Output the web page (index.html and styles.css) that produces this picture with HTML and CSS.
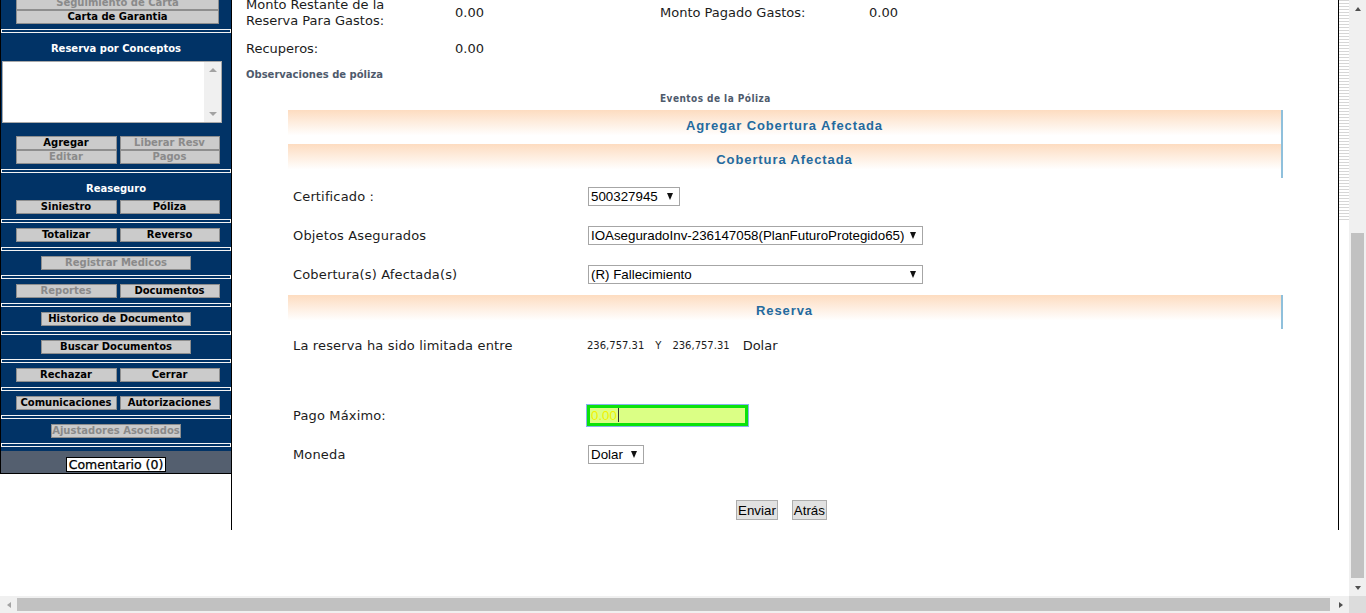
FILE: index.html
```html
<!DOCTYPE html>
<html lang="es">
<head>
<meta charset="utf-8">
<title>Agregar Cobertura Afectada</title>
<link rel="stylesheet" href="styles.css">
</head>
<body>
<div class="screen">
  <div class="viewport">
    <div class="page">
      <aside class="sidebar">
        <div class="side-sec first">
          <div class="btn w203 disabled">Seguimiento de Carta</div>
          <div class="btn w203">Carta de Garantia</div>
        </div>
        <div class="sep"></div>
        <div class="side-sec">
          <div class="side-title">Reserva por Conceptos</div>
          <div class="fake-ta"><div class="ta-bar"><span class="tri-up"></span><span class="tri-down"></span></div></div>
          <div class="pair mt13">
            <div class="btn hl">Agregar</div><div class="btn hr disabled">Liberar Resv</div>
          </div>
          <div class="pair">
            <div class="btn hl disabled">Editar</div><div class="btn hr disabled">Pagos</div>
          </div>
        </div>
        <div class="sep"></div>
        <div class="side-sec">
          <div class="side-title">Reaseguro</div>
          <div class="pair mt4">
            <div class="btn hl">Siniestro</div><div class="btn hr">Póliza</div>
          </div>
        </div>
        <div class="sep"></div>
        <div class="side-sec">
          <div class="pair"><div class="btn hl">Totalizar</div><div class="btn hr">Reverso</div></div>
        </div>
        <div class="sep"></div>
        <div class="side-sec">
          <div class="btn w150 disabled">Registrar Medicos</div>
        </div>
        <div class="sep"></div>
        <div class="side-sec">
          <div class="pair"><div class="btn hl disabled">Reportes</div><div class="btn hr">Documentos</div></div>
        </div>
        <div class="sep"></div>
        <div class="side-sec">
          <div class="btn w150">Historico de Documento</div>
        </div>
        <div class="sep"></div>
        <div class="side-sec">
          <div class="btn w150">Buscar Documentos</div>
        </div>
        <div class="sep"></div>
        <div class="side-sec">
          <div class="pair"><div class="btn hl">Rechazar</div><div class="btn hr">Cerrar</div></div>
        </div>
        <div class="sep"></div>
        <div class="side-sec">
          <div class="pair"><div class="btn hl">Comunicaciones</div><div class="btn hr">Autorizaciones</div></div>
        </div>
        <div class="sep"></div>
        <div class="side-sec">
          <div class="btn w130 disabled">Ajustadores Asociados</div>
        </div>
        <div class="sep"></div>
        <div class="comment-bar">
          <div class="comment-btn">Comentario (0)</div>
        </div>
      </aside>

      <main class="main">
        <div class="main-inner">
          <table class="summary">
            <tr>
              <td class="c1">Monto Restante de la<br>Reserva Para Gastos:</td>
              <td class="c2">0.00</td>
              <td class="c3">Monto Pagado Gastos:</td>
              <td class="c4">0.00</td>
            </tr>
            <tr>
              <td class="c1">Recuperos:</td>
              <td class="c2">0.00</td>
              <td class="c3"></td>
              <td class="c4"></td>
            </tr>
          </table>
          <div class="obs">Observaciones de póliza</div>
          <div class="eventos">Eventos de la Póliza</div>

          <div class="form-wrap">
            <div class="bar">Agregar Cobertura Afectada</div>
            <div class="bar">Cobertura Afectada</div>

            <div class="frow r39">
              <div class="flabel">Certificado :</div>
              <div class="fval"><div class="sel w92"><span>500327945</span><i class="arr"></i></div></div>
            </div>
            <div class="frow r39">
              <div class="flabel">Objetos Asegurados</div>
              <div class="fval"><div class="sel w335"><span>IOAseguradoInv-236147058(PlanFuturoProtegido65)</span><i class="arr"></i></div></div>
            </div>
            <div class="frow r39">
              <div class="flabel">Cobertura(s) Afectada(s)</div>
              <div class="fval"><div class="sel w335"><span>(R) Fallecimiento</span><i class="arr"></i></div></div>
            </div>

            <div class="bar">Reserva</div>

            <div class="frow r32">
              <div class="flabel">La reserva ha sido limitada entre</div>
              <div class="fval nums"><span class="small">236,757.31</span><span class="small y">Y</span><span class="small">236,757.31</span><span class="cur">Dolar</span></div>
            </div>
            <div class="frow r34"></div>
            <div class="frow r40">
              <div class="flabel">Pago Máximo:</div>
              <div class="fval"><div class="money"><span class="money-val">0.00</span><span class="caret"></span></div></div>
            </div>
            <div class="frow r39m">
              <div class="flabel">Moneda</div>
              <div class="fval"><div class="sel w56"><span>Dolar</span><i class="arr"></i></div></div>
            </div>
            <div class="actions">
              <button class="act" type="button">Enviar</button>
              <button class="act" type="button">Atrás</button>
            </div>
          </div>
        </div>
      </main>
      <div class="stripes"></div>
    </div>
  </div>
  <div class="vscroll">
    <span class="sb-btn"><i class="a-up"></i></span>
    <div class="vtrack"><div class="vthumb"></div></div>
    <span class="sb-btn"><i class="a-down"></i></span>
  </div>
  <div class="hscroll">
    <span class="sb-btn"><i class="a-left"></i></span>
    <div class="htrack"><div class="hthumb"></div></div>
    <span class="sb-btn"><i class="a-right"></i></span>
  </div>
  <div class="corner"></div>
</div>
</body>
</html>
```
FILE: styles.css
```css
* { box-sizing: border-box; }
html, body { margin: 0; padding: 0; background: #fff; overflow: hidden; }
body { width: 1366px; height: 613px; font-family: "DejaVu Sans", Verdana, sans-serif; color: #1c1c1c; }

.screen {
  display: grid;
  grid-template-columns: 1349px 17px;
  grid-template-rows: 596px 17px;
  width: 1366px;
  height: 613px;
}
.viewport { overflow: hidden; background: #fff; }
.page { display: flex; align-items: flex-start; width: 1349px; }

/* ---------- sidebar ---------- */
.sidebar {
  width: 231px;
  flex: none;
  background: #013366;
  border-left: 1px solid #000;
}
.side-sec { padding: 5px 0; display: flex; flex-direction: column; align-items: center; }
.side-sec.first { margin-top: -9px; }
.sep {
  height: 4px;
  border: 1px solid #f4f4f4;
}
.side-title {
  margin-top: 4px;
  height: 14px;
  line-height: 14px;
  color: #fff;
  font-weight: bold;
  font-size: 10px;
  text-align: center;
  width: 100%;
}
.btn {
  height: 14px;
  line-height: 12px;
  background: #cbcbcb;
  border: 1px solid #8e8e8e;
  font-size: 10px;
  font-weight: bold;
  color: #000;
  text-align: center;
  white-space: nowrap;
  overflow: hidden;
}
.btn.disabled { color: #8a8a8a; }
.w203 { width: 203px; margin-left: 3px; }
.w150 { width: 150px; }
.w130 { width: 130px; }
.pair { display: flex; gap: 3px; margin-left: 3px; }
.pair .hl { width: 101px; }
.pair .hr { width: 100px; }
.mt13 { margin-top: 13px; }
.mt4 { margin-top: 4px; }

.fake-ta {
  margin-top: 5px;
  align-self: flex-start;
  margin-left: 1px;
  width: 220px;
  height: 62px;
  background: #fff;
  border: 1px solid #a9a9a9;
  display: flex;
  justify-content: flex-end;
}
.ta-bar {
  width: 17px;
  background: #f0f0f0;
  display: flex;
  flex-direction: column;
  justify-content: space-between;
  align-items: center;
  padding: 6px 0 6px;
}
.tri-up { width: 0; height: 0; border-left: 4px solid transparent; border-right: 4px solid transparent; border-bottom: 4px solid #a3a3a3; }
.tri-down { width: 0; height: 0; border-left: 4px solid transparent; border-right: 4px solid transparent; border-top: 4px solid #a3a3a3; }

.comment-bar {
  margin-top: 4px;
  height: 23px;
  background: #545f6f;
  border-bottom: 1px solid #000;
  display: flex;
  justify-content: center;
  padding-top: 6px;
}
.comment-btn {
  width: 100px;
  height: 15px;
  line-height: 13px;
  background: #fff;
  border: 1px solid #000;
  font-size: 12.5px;
  -webkit-text-stroke: 0.25px #000;
  color: #000;
  text-align: center;
  white-space: nowrap;
}

/* ---------- main ---------- */
.main {
  width: 1108px;
  flex: none;
  height: 530px;
  border-left: 1px solid #000;
  border-right: 1px solid #000;
  overflow: hidden;
}
.main-inner { padding-left: 14px; }

.summary { border-collapse: collapse; margin-top: -9px; font-size: 13px; }
.summary td { padding: 6px 0; line-height: 16px; vertical-align: middle; }
.summary .c1 { width: 209px; }
.summary .c2 { width: 205px; }
.summary .c3 { width: 209px; }

.obs {
  margin-top: 6px;
  height: 12px;
  line-height: 12px;
  font-size: 10px;
  font-weight: bold;
  color: #4e5a6c;
}
.eventos {
  margin-top: 12px;
  margin-left: 414px;
  height: 12px;
  line-height: 12px;
  font-size: 10px;
  font-weight: bold;
  color: #4e5a6c;
  font-stretch: condensed;
  letter-spacing: 0.45px;
}

.form-wrap { margin-top: 5px; margin-left: 42px; width: 995px; }
.bar {
  height: 34px;
  border-right: 2px solid #8fc0dc;
  background: linear-gradient(to bottom, #fddcc0 0%, #fff 75%);
  display: flex;
  align-items: center;
  justify-content: center;
  padding-bottom: 3px;
  font-family: "Liberation Sans", Arial, sans-serif;
  font-weight: bold;
  font-size: 13px;
  letter-spacing: 0.9px;
  color: #246a9e;
}

.frow { display: flex; align-items: center; font-size: 13px; }
.r39 { height: 39px; padding-bottom: 3px; }
.r32 { height: 32px; }
.r34 { height: 34px; }
.r40 { height: 40px; }
.r39m { height: 39px; }
.flabel { width: 299px; padding-left: 5px; flex: none; white-space: nowrap; letter-spacing: 0.15px; }
.fval { display: flex; align-items: center; }

.sel {
  margin-left: 1px;
  height: 19px;
  border: 1px solid #a6a6a6;
  background: #fff;
  display: flex;
  align-items: center;
  padding: 0 6px 0 2px;
  font-family: "Liberation Sans", Arial, sans-serif;
  font-size: 13.333px;
  color: #000;
  white-space: nowrap;
}
.sel .arr {
  margin-left: auto;
  width: 0; height: 0;
  border-left: 3.5px solid transparent;
  border-right: 3.5px solid transparent;
  border-top: 7px solid #111;
}
.w92 { width: 92px; }
.w335 { width: 335px; }
.w56 { width: 56px; }

.nums { font-size: 13px; }
.small { font-size: 10px; }
.small.y { margin: 0 11px 0 11px; }
.cur { margin-left: 13px; }

.money {
  width: 161px;
  height: 21px;
  border: 3px solid #0be20b;
  background: #dbff85;
  box-shadow: 0 0 0 1px #86b3ee;
  display: flex;
  align-items: center;
  padding-left: 1px;
  font-family: "Liberation Sans", Arial, sans-serif;
  font-size: 13.333px;
}
.money-val { color: #f2f200; }
.caret { width: 1px; height: 14px; background: #333; margin-left: 1px; }

.actions {
  padding-top: 26px;
  display: flex;
  justify-content: center;
  gap: 14px;
  padding-right: 8px;
}
.act {
  height: 20px;
  margin: 0;
  padding: 0 1px;
  background: #e1e1e1;
  border: 1px solid #adadad;
  border-radius: 0;
  font-family: "Liberation Sans", Arial, sans-serif;
  font-size: 13.333px;
  color: #000;
}

.stripes {
  width: 10px;
  height: 220px;
  flex: none;
  background: repeating-linear-gradient(to bottom, #d6d6d6 0, #d6d6d6 1px, #fff 1px, #fff 3px);
}

/* ---------- scrollbars ---------- */
.vscroll { background: #f0f0f0; display: flex; flex-direction: column; }
.hscroll { background: #f0f0f0; display: flex; }
.corner { background: #dcdcdc; }
.sb-btn { width: 17px; height: 17px; flex: none; display: flex; align-items: center; justify-content: center; }
.vtrack { flex: 1; position: relative; }
.vthumb { margin: 216px 2px 0 2px; height: 345px; background: #c1c1c1; }
.htrack { flex: 1; padding: 2px 0; }
.hthumb { height: 13px; width: 1313px; background: #c1c1c1; }
.a-up { width: 0; height: 0; border-left: 3.5px solid transparent; border-right: 3.5px solid transparent; border-bottom: 4px solid #505050; }
.a-down { width: 0; height: 0; border-left: 3.5px solid transparent; border-right: 3.5px solid transparent; border-top: 4px solid #505050; }
.a-left { width: 0; height: 0; border-top: 3.5px solid transparent; border-bottom: 3.5px solid transparent; border-right: 4px solid #a3a3a3; }
.a-right { width: 0; height: 0; border-top: 3.5px solid transparent; border-bottom: 3.5px solid transparent; border-left: 4px solid #505050; }
```
